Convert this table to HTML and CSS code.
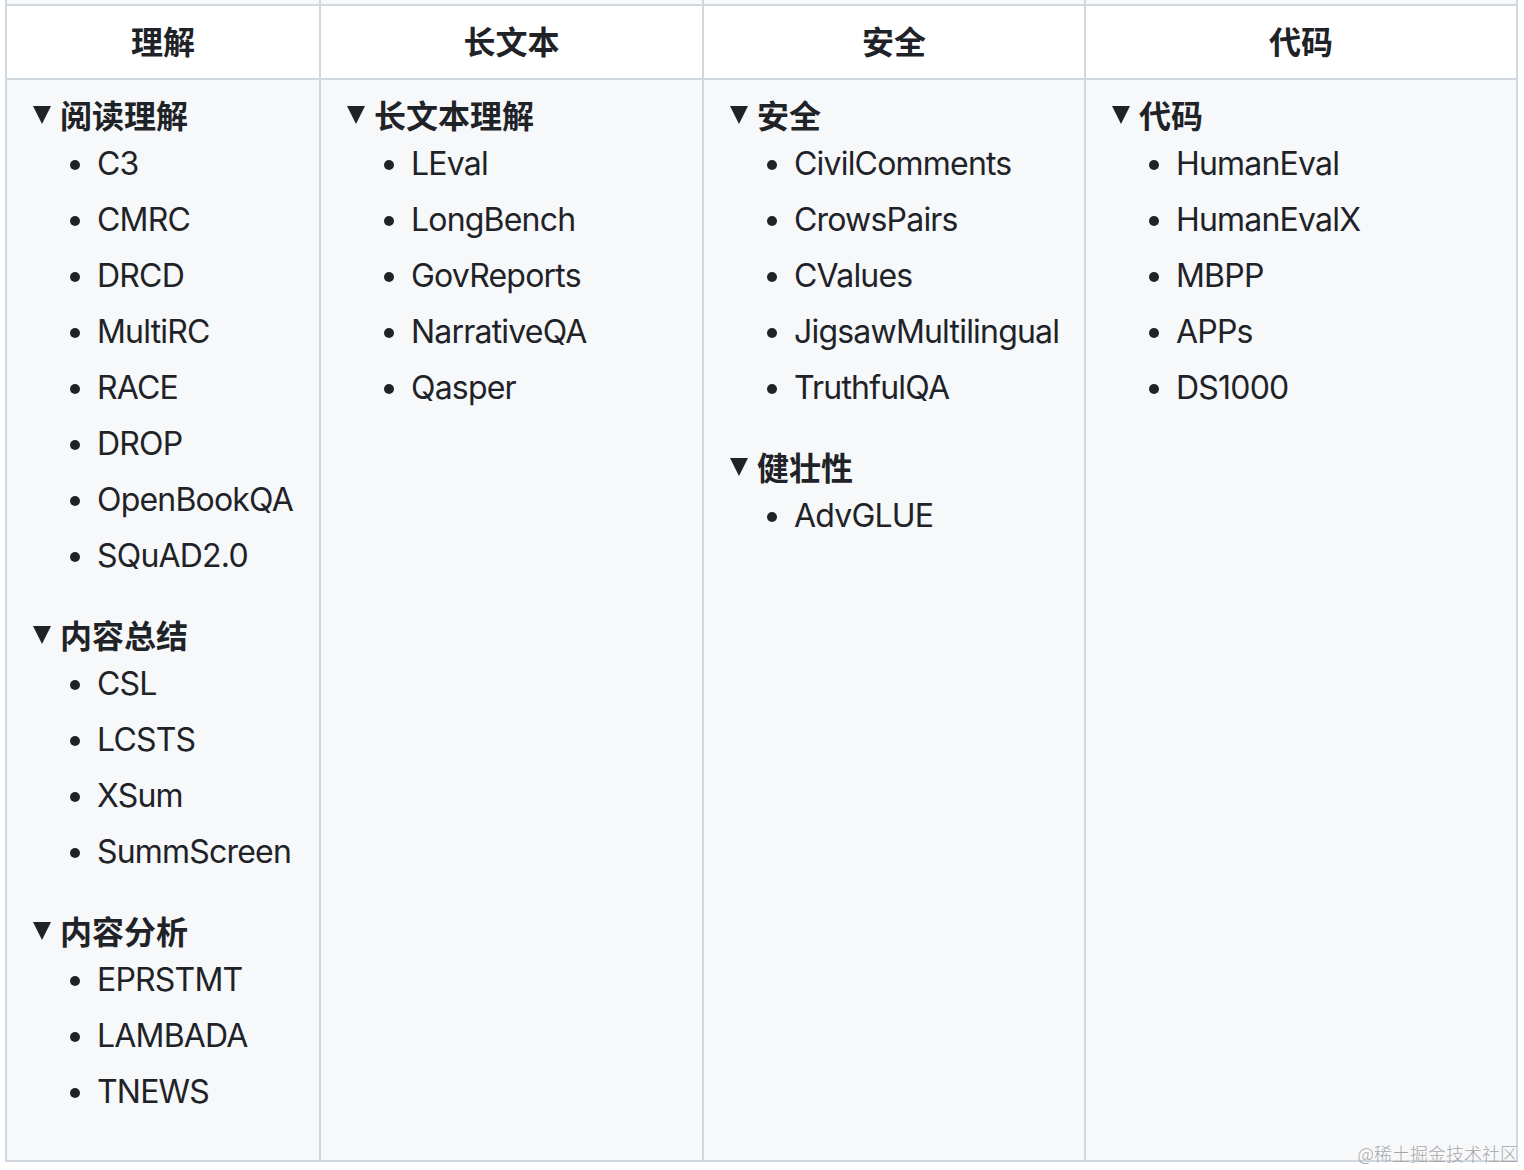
FILE: index.html
```html
<!DOCTYPE html>
<html lang="zh">
<head>
<meta charset="utf-8">
<title>Datasets</title>
<link rel="stylesheet" href="styles.css">
</head>
<body>
<div class="page">
  <table class="grid">
    <colgroup>
      <col class="c1"><col class="c2"><col class="c3"><col class="c4">
    </colgroup>
    <tbody>
      <tr class="prev"><td></td><td></td><td></td><td></td></tr>
      <tr class="head">
        <th>理解</th><th>长文本</th><th>安全</th><th>代码</th>
      </tr>
      <tr class="body">
        <td>
          <div class="group">
            <div class="summary">阅读理解</div>
            <ul>
              <li>C3</li><li>CMRC</li><li>DRCD</li><li>MultiRC</li><li>RACE</li><li>DROP</li><li>OpenBookQA</li><li>SQuAD2.0</li>
            </ul>
          </div>
          <div class="group">
            <div class="summary">内容总结</div>
            <ul>
              <li>CSL</li><li>LCSTS</li><li>XSum</li><li>SummScreen</li>
            </ul>
          </div>
          <div class="group">
            <div class="summary">内容分析</div>
            <ul>
              <li>EPRSTMT</li><li>LAMBADA</li><li>TNEWS</li>
            </ul>
          </div>
        </td>
        <td>
          <div class="group">
            <div class="summary">长文本理解</div>
            <ul>
              <li>LEval</li><li>LongBench</li><li>GovReports</li><li>NarrativeQA</li><li>Qasper</li>
            </ul>
          </div>
        </td>
        <td>
          <div class="group">
            <div class="summary">安全</div>
            <ul>
              <li>CivilComments</li><li>CrowsPairs</li><li>CValues</li><li>JigsawMultilingual</li><li>TruthfulQA</li>
            </ul>
          </div>
          <div class="group">
            <div class="summary">健壮性</div>
            <ul>
              <li>AdvGLUE</li>
            </ul>
          </div>
        </td>
        <td>
          <div class="group">
            <div class="summary">代码</div>
            <ul>
              <li>HumanEval</li><li>HumanEvalX</li><li>MBPP</li><li>APPs</li><li>DS1000</li>
            </ul>
          </div>
        </td>
      </tr>
    </tbody>
  </table>
  <div class="watermark">@稀土掘金技术社区</div>
</div>
</body>
</html>
```

FILE: styles.css
```css
html, body {
  margin: 0;
  padding: 0;
  background: #ffffff;
}

.page {
  position: relative;
  width: 1524px;
  height: 1170px;
  overflow: hidden;
  padding-left: 5px;
  box-sizing: border-box;
  font-family: Inter, "Noto Sans CJK SC", sans-serif;
  color: #1f2328;
  font-size: 32px;
  line-height: 48px;
}

.grid {
  border-collapse: collapse;
  table-layout: fixed;
  width: 1511px;
}

.c1 { width: 314px; }
.c2 { width: 383px; }
.c3 { width: 382px; }
.c4 { width: 432px; }

.grid td, .grid th {
  border: 2px solid #d0d7de;
  padding: 12px 26px;
  vertical-align: top;
}

.prev td {
  border-top: none;
  padding: 0;
  height: 4px;
  background: #f6f8fa;
}

.head th {
  background: #ffffff;
  font-weight: 700;
  text-align: center;
  font-family: "Noto Sans CJK SC", sans-serif;
  font-size: 32px;
  padding: 10px 26px 14px;
  height: 48px;
}

.body td {
  background: #f6f8fa;
}

.summary {
  display: flex;
  align-items: center;
  box-sizing: border-box;
  font-weight: 700;
  font-family: "Noto Sans CJK SC", sans-serif;
  font-size: 32px;
  height: 48px;
  padding-bottom: 4px;
}

.summary::before {
  content: "";
  width: 0;
  height: 0;
  border-left: 9px solid transparent;
  border-right: 9px solid transparent;
  border-top: 18px solid #1f2328;
  margin-right: 9px;
  margin-top: 2px;
}

.group ul {
  margin: 0 0 32px;
  padding-left: 64px;
  letter-spacing: -0.8px;
}

.group li + li {
  margin-top: 8px;
}

.watermark {
  position: absolute;
  right: 6px;
  bottom: 7px;
  font-family: "Noto Sans CJK SC", sans-serif;
  font-weight: 300;
  font-size: 18px;
  line-height: 20px;
  color: rgba(150, 150, 150, 0.85);
}
```
